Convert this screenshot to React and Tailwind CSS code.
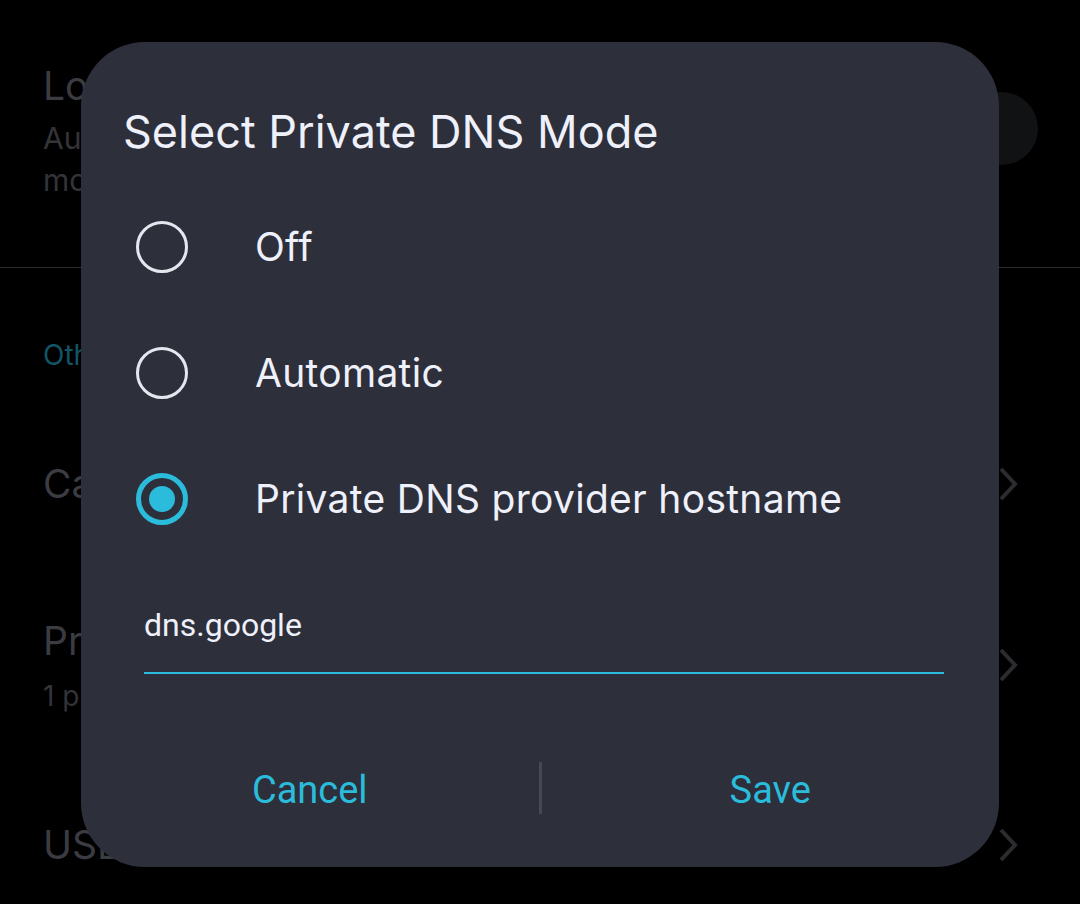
import { useState } from "react";

function Chevron() {
  return (
    <svg width="20" height="36" viewBox="0 0 20 36" fill="none">
      <path d="M3 3 L17 18 L3 33" stroke="#2b2c30" strokeWidth="4" />
    </svg>
  );
}

function Radio({ checked }) {
  if (checked) {
    return (
      <div className="size-[52px] rounded-full border-[5px] border-[#2bbcdc] flex items-center justify-center shrink-0">
        <div className="size-[26px] rounded-full bg-[#2bbcdc]" />
      </div>
    );
  }
  return <div className="size-[52px] rounded-full border-[3px] border-[#e6e7ee] shrink-0" />;
}

export default function App() {
  const [mode, setMode] = useState("hostname");
  const [host, setHost] = useState("dns.google");
  const options = [
    { id: "off", label: "Off" },
    { id: "auto", label: "Automatic" },
    { id: "hostname", label: "Private DNS provider hostname" },
  ];

  return (
    <div className="relative w-[1080px] h-[904px] overflow-hidden bg-black font-['Inter',sans-serif]">
      {/* settings list behind the dialog */}
      <div className="flex flex-col">
        <div className="flex items-center justify-between pl-[43px] pr-[42px] h-[268px] border-b border-[#2a2b2f]">
          <div className="flex flex-col -mt-[8px]">
            <div className="text-[39px] leading-[54px] text-[#3b3c41]">Low latency mode</div>
            <div className="text-[30px] leading-[42px] text-[#333438] mt-1">
              Automatically lower latency in
              <br />
              mobile data connections
            </div>
          </div>
          <div className="w-[120px] h-[73px] rounded-full bg-[#111214] -mt-[10px]" />
        </div>
        <div className="pl-[43px] pt-[70px] text-[28px] leading-[34px] text-[#125566]">Others</div>
        <div className="flex items-center justify-between pl-[43px] pr-[62px] h-[130px] mt-[47px]">
          <div className="text-[39px] text-[#3b3c41]">Captive portal</div>
          <Chevron />
        </div>
        <div className="flex items-center justify-between pl-[43px] pr-[62px] h-[170px] mt-[31px]">
          <div className="flex flex-col">
            <div className="text-[39px] leading-[52px] text-[#3b3c41]">Private DNS</div>
            <div className="text-[28px] leading-[40px] text-[#333438] mt-[9px]">1 private DNS provider</div>
          </div>
          <Chevron />
        </div>
        <div className="flex items-center justify-between pl-[43px] pr-[62px] h-[110px] mt-[40px]">
          <div className="text-[39px] text-[#3b3c41]">USB tethering</div>
          <Chevron />
        </div>
      </div>

      {/* dialog */}
      <div className="absolute left-[81px] top-[42px] w-[918px] h-[825px] rounded-[64px] bg-[#2d2f3b] flex flex-col">
        <div className="px-[42px] text-[45px] text-[#eef0fa] mt-[64px] leading-[52px]">
          Select Private DNS Mode
        </div>
        <div className="flex flex-col mt-[26px] px-[42px]">
          {options.map((o) => (
            <button
              key={o.id}
              onClick={() => setMode(o.id)}
              className="flex items-center h-[126px] pl-[13px] text-left"
            >
              <Radio checked={mode === o.id} />
              <span className="ml-[67px] text-[39px] tracking-[0.3px] text-[#eef0fa]">{o.label}</span>
            </button>
          ))}
        </div>
        <div className="ml-[63px] mr-[55px] mt-[45px] border-b-2 border-[#2bbcdc] pb-[29px]">
          <input
            value={host}
            onChange={(e) => setHost(e.target.value)}
            className="w-full bg-transparent outline-none text-[32px] text-[#eef0fa] font-['Roboto',sans-serif] leading-[36px]"
          />
        </div>
        <div className="flex items-center mt-[88px] h-[52px]">
          <button className="flex-1 text-center text-[38px] text-[#2bbcdc] font-['Roboto',sans-serif] pt-[4px]">
            Cancel
          </button>
          <div className="w-[3px] h-[52px] bg-[#464955]" />
          <button className="flex-1 text-center text-[38px] text-[#2bbcdc] font-['Roboto',sans-serif] pt-[4px]">
            Save
          </button>
        </div>
      </div>
    </div>
  );
}
